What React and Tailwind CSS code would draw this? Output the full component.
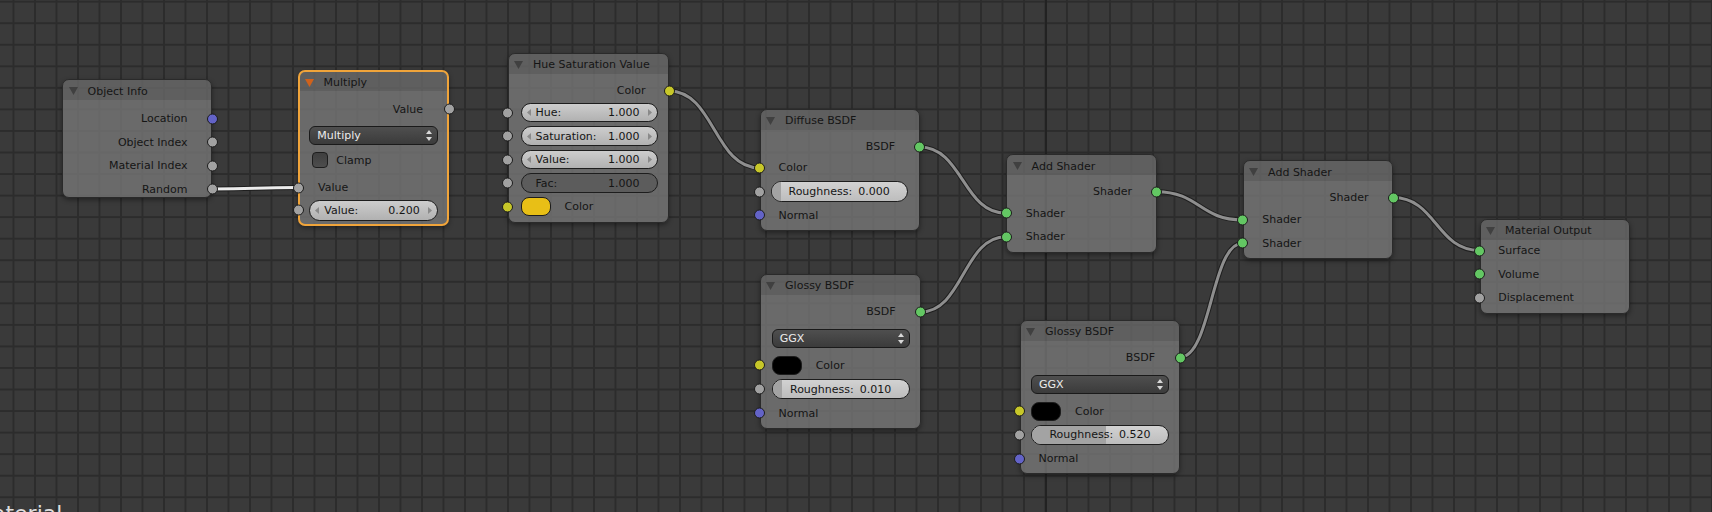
import React from "react";

const SOCK = {
  shader: "bg-[#63c763]",
  color: "bg-[#c7c729]",
  vector: "bg-[#6363c7]",
  value: "bg-[#a1a1a1]",
};

function Socket({ side, type, sel }) {
  const pos =
    side === "left"
      ? sel
        ? "left-[-7.5px]"
        : "left-[-6.5px]"
      : sel
        ? "right-[-7.5px]"
        : "right-[-6.5px]";
  return (
    <span
      className={`absolute top-1/2 -translate-y-1/2 w-[11px] h-[11px] rounded-full border border-[#1c1c1c] ${pos} ${SOCK[type]}`}
    />
  );
}

function Row({ className = "", inSock, outSock, sel, children }) {
  return (
    <div className={`relative flex items-center shrink-0 ${className}`}>
      {inSock && <Socket side="left" type={inSock} sel={sel} />}
      {children}
      {outSock && <Socket side="right" type={outSock} sel={sel} />}
    </div>
  );
}

function Node({ className, title, selected, children }) {
  return (
    <div
      className={`absolute flex flex-col rounded-[7px] bg-[#7b7b7b]/75 shadow-[0_2px_5px_rgba(0,0,0,0.4)] ${
        selected ? "border-2 border-[#f0a43a]" : "border border-[#2a2a2a]"
      } ${className}`}
    >
      <div
        className={`flex items-center shrink-0 rounded-t-[6px] bg-black/10 pt-[2px] ${
          selected ? "h-[19px] pl-[4.6px]" : "h-[20px] pl-[5.6px]"
        }`}
      >
        <svg width="9" height="8" viewBox="0 0 9 8">
          <polygon
            points="0,0 9,0 4.5,8"
            fill={selected ? "#d0621c" : "#404040"}
          />
        </svg>
        <span className="ml-[10px]">{title}</span>
      </div>
      {children}
    </div>
  );
}

function NumField({ label, value, dark }) {
  return (
    <div
      className={`relative flex items-center flex-1 h-full rounded-full border border-[#1d1d1d] pl-[14px] pr-[17px] ${
        dark ? "bg-[#5c5c5c]" : "bg-linear-to-b from-[#cdcdcd] to-[#b1b1b1]"
      }`}
    >
      {!dark && (
        <>
          <svg className="absolute left-[5px]" width="4" height="7" viewBox="0 0 4 7">
            <polygon points="4,0 4,7 0,3.5" fill="#8a8a8a" />
          </svg>
          <svg className="absolute right-[5px]" width="4" height="7" viewBox="0 0 4 7">
            <polygon points="0,0 0,7 4,3.5" fill="#8a8a8a" />
          </svg>
        </>
      )}
      <span>{label}</span>
      <span className="ml-auto">{value}</span>
    </div>
  );
}

function Slider({ value, fill }) {
  return (
    <div className="relative flex items-center justify-center flex-1 h-full rounded-full border border-[#1d1d1d] bg-linear-to-b from-[#d2d2d2] to-[#bdbdbd] overflow-hidden">
      <div
        className="absolute left-0 top-0 bottom-0 bg-[#a3a3a3]"
        style={{ width: fill }}
      />
      <span className="relative">Roughness:</span>
      <span className="relative ml-[6px]">{value}</span>
    </div>
  );
}

function Dropdown({ label }) {
  return (
    <div className="relative flex items-center flex-1 h-full rounded-[6px] border border-[#1a1a1a] bg-linear-to-b from-[#4f4f4f] to-[#3b3b3b] pl-[7px] text-[#ececec]">
      <span>{label}</span>
      <svg className="absolute right-[5px]" width="6" height="11" viewBox="0 0 6 11">
        <polygon points="3,0 6,4 0,4" fill="#d8d8d8" />
        <polygon points="0,7 6,7 3,11" fill="#d8d8d8" />
      </svg>
    </div>
  );
}

function Swatch({ color }) {
  return (
    <div className={`w-[30px] h-full rounded-[8px] border border-[#1d1d1d] ${color}`} />
  );
}

const curve = (x1, y1, x2, y2) => {
  const d = Math.abs(x2 - x1) * 0.5;
  return `M${x1} ${y1} C${x1 + d} ${y1} ${x2 - d} ${y2} ${x2} ${y2}`;
};

const links = [
  [212, 189, 297.7, 187.6, true],
  [669, 90.9, 759.5, 167.9],
  [919.5, 146.9, 1006, 213.3],
  [920.5, 311.9, 1006, 236.8],
  [1156.5, 191.7, 1242.5, 219.9],
  [1180, 357.3, 1242.5, 243.3],
  [1393, 197.6, 1479.5, 250.4],
];

export default function App() {
  return (
    <div className="relative w-[1712px] h-[512px] overflow-hidden bg-[#3a3a3a] bg-[linear-gradient(to_right,#2c2c2c_2px,transparent_2px),linear-gradient(to_bottom,#2c2c2c_2px,transparent_2px)] bg-[size:21.5px_21.55px] bg-[position:12.5px_0.7px] font-['DejaVu_Sans',sans-serif] text-[11px] text-[#151515] leading-none">
      {/* darker grid axis */}
      <div className="absolute left-[1044.6px] top-0 w-[2.2px] h-full bg-[#222222]" />

      {/* links */}
      <svg className="absolute inset-0 pointer-events-none" width="1712" height="512">
        {links.map(([x1, y1, x2, y2, hi], i) => (
          <g key={i}>
            <path d={curve(x1, y1, x2, y2)} fill="none" stroke="#1e1e1e" strokeWidth="5" />
            <path
              d={curve(x1, y1, x2, y2)}
              fill="none"
              stroke={hi ? "#ececec" : "#8e8e8e"}
              strokeWidth="3"
            />
          </g>
        ))}
      </svg>

      {/* Object Info */}
      <Node className="left-[62px] top-[79px] w-[150px] h-[119px]" title="Object Info">
        <Row className="mt-[8.5px] h-[20px] justify-end pr-[23.5px]" outSock="vector">Location</Row>
        <Row className="mt-[3.5px] h-[20px] justify-end pr-[23.5px]" outSock="value">Object Index</Row>
        <Row className="mt-[3.5px] h-[20px] justify-end pr-[23.5px]" outSock="value">Material Index</Row>
        <Row className="mt-[3.5px] h-[20px] justify-end pr-[23.5px]" outSock="value">Random</Row>
      </Node>

      {/* Multiply */}
      <Node className="left-[298px] top-[70px] w-[151px] h-[156px]" title="Multiply" selected>
        <Row className="mt-[8.3px] h-[20px] justify-end pr-[24px]" outSock="value" sel>Value</Row>
        <Row className="mt-[6.4px] h-[19.5px] mx-[9.3px]">
          <Dropdown label="Multiply" />
        </Row>
        <Row className="mt-[5px] h-[20px] pl-[12.3px]">
          <div className="w-[16px] h-[16px] rounded-[4px] border border-[#1d1d1d] bg-linear-to-b from-[#3f3f3f] to-[#4d4d4d]" />
          <span className="ml-[8px]">Clamp</span>
        </Row>
        <Row className="mt-[7.4px] h-[20px] pl-[18px]" inSock="value" sel>Value</Row>
        <Row className="mt-[2.6px] h-[20.4px] mx-[9.3px]">
          <span className="absolute left-[-16.8px] top-1/2 -translate-y-1/2 w-[11px] h-[11px] rounded-full border border-[#1c1c1c] bg-[#a1a1a1]" />
          <NumField label="Value:" value="0.200" />
        </Row>
      </Node>

      {/* Hue Saturation Value */}
      <Node className="left-[507.5px] top-[52.5px] w-[161.5px] h-[170px]" title="Hue Saturation Value">
        <Row className="mt-[7.4px] h-[20px] justify-end pr-[22.5px]" outSock="color">Color</Row>
        <Row className="mt-[2px] h-[19.5px] ml-[12px] mr-[10.5px]">
          <span className="absolute left-[-18.7px] top-1/2 -translate-y-1/2 w-[11px] h-[11px] rounded-full border border-[#1c1c1c] bg-[#a1a1a1]" />
          <NumField label="Hue:" value="1.000" />
        </Row>
        <Row className="mt-[4px] h-[19.5px] ml-[12px] mr-[10.5px]">
          <span className="absolute left-[-18.7px] top-1/2 -translate-y-1/2 w-[11px] h-[11px] rounded-full border border-[#1c1c1c] bg-[#a1a1a1]" />
          <NumField label="Saturation:" value="1.000" />
        </Row>
        <Row className="mt-[4px] h-[19.5px] ml-[12px] mr-[10.5px]">
          <span className="absolute left-[-18.7px] top-1/2 -translate-y-1/2 w-[11px] h-[11px] rounded-full border border-[#1c1c1c] bg-[#a1a1a1]" />
          <NumField label="Value:" value="1.000" />
        </Row>
        <Row className="mt-[4px] h-[19.5px] ml-[12px] mr-[10.5px]">
          <span className="absolute left-[-18.7px] top-1/2 -translate-y-1/2 w-[11px] h-[11px] rounded-full border border-[#1c1c1c] bg-[#a1a1a1]" />
          <NumField label="Fac:" value="1.000" dark />
        </Row>
        <Row className="mt-[4px] h-[19.5px] ml-[12px]">
          <span className="absolute left-[-18.7px] top-1/2 -translate-y-1/2 w-[11px] h-[11px] rounded-full border border-[#1c1c1c] bg-[#c7c729]" />
          <Swatch color="bg-[#e8bf16]" />
          <span className="ml-[14px]">Color</span>
        </Row>
      </Node>

      {/* Diffuse BSDF */}
      <Node className="left-[759.5px] top-[108.5px] w-[160px] h-[122px]" title="Diffuse BSDF">
        <Row className="mt-[7.4px] h-[20px] justify-end pr-[23.5px]" outSock="shader">BSDF</Row>
        <Row className="mt-[1px] h-[20px] pl-[18px]" inSock="color">Color</Row>
        <Row className="mt-[3.6px] h-[20.5px] ml-[10.2px] mr-[11px]">
          <span className="absolute left-[-16.7px] top-1/2 -translate-y-1/2 w-[11px] h-[11px] rounded-full border border-[#1c1c1c] bg-[#a1a1a1]" />
          <Slider value="0.000" fill="9px" />
        </Row>
        <Row className="mt-[3.5px] h-[20px] pl-[18px]" inSock="vector">Normal</Row>
      </Node>

      {/* Glossy BSDF 1 */}
      <Node className="left-[759.5px] top-[273.5px] w-[161px] h-[155px]" title="Glossy BSDF">
        <Row className="mt-[7.4px] h-[20px] justify-end pr-[24px]" outSock="shader">BSDF</Row>
        <Row className="mt-[7.5px] h-[19px] ml-[11.2px] mr-[10px]">
          <Dropdown label="GGX" />
        </Row>
        <Row className="mt-[7.5px] h-[19px] ml-[11.2px]">
          <span className="absolute left-[-17.7px] top-1/2 -translate-y-1/2 w-[11px] h-[11px] rounded-full border border-[#1c1c1c] bg-[#c7c729]" />
          <Swatch color="bg-black" />
          <span className="ml-[14px]">Color</span>
        </Row>
        <Row className="mt-[4px] h-[20.3px] ml-[11.2px] mr-[10px]">
          <span className="absolute left-[-17.7px] top-1/2 -translate-y-1/2 w-[11px] h-[11px] rounded-full border border-[#1c1c1c] bg-[#a1a1a1]" />
          <Slider value="0.010" fill="9px" />
        </Row>
        <Row className="mt-[4px] h-[20px] pl-[18px]" inSock="vector">Normal</Row>
      </Node>

      {/* Glossy BSDF 2 */}
      <Node className="left-[1019.5px] top-[319.5px] w-[160.5px] h-[154px]" title="Glossy BSDF">
        <Row className="mt-[7px] h-[20px] justify-end pr-[24px]" outSock="shader">BSDF</Row>
        <Row className="mt-[7.5px] h-[19px] ml-[10.5px] mr-[10px]">
          <Dropdown label="GGX" />
        </Row>
        <Row className="mt-[7.5px] h-[19px] ml-[10.5px]">
          <span className="absolute left-[-17px] top-1/2 -translate-y-1/2 w-[11px] h-[11px] rounded-full border border-[#1c1c1c] bg-[#c7c729]" />
          <Swatch color="bg-black" />
          <span className="ml-[14px]">Color</span>
        </Row>
        <Row className="mt-[4px] h-[20.3px] ml-[10.5px] mr-[10px]">
          <span className="absolute left-[-17px] top-1/2 -translate-y-1/2 w-[11px] h-[11px] rounded-full border border-[#1c1c1c] bg-[#a1a1a1]" />
          <Slider value="0.520" fill="74px" />
        </Row>
        <Row className="mt-[4px] h-[20px] pl-[18px]" inSock="vector">Normal</Row>
      </Node>

      {/* Add Shader 1 */}
      <Node className="left-[1006px] top-[154px] w-[150.5px] h-[98.5px]" title="Add Shader">
        <Row className="mt-[6.7px] h-[20px] justify-end pr-[23.5px]" outSock="shader">Shader</Row>
        <Row className="mt-[1.8px] h-[20px] pl-[18.7px]" inSock="shader">Shader</Row>
        <Row className="mt-[3.5px] h-[20px] pl-[18.7px]" inSock="shader">Shader</Row>
      </Node>

      {/* Add Shader 2 */}
      <Node className="left-[1242.5px] top-[160px] w-[150.5px] h-[98.5px]" title="Add Shader">
        <Row className="mt-[6.6px] h-[20px] justify-end pr-[23.5px]" outSock="shader">Shader</Row>
        <Row className="mt-[2.4px] h-[20px] pl-[18.7px]" inSock="shader">Shader</Row>
        <Row className="mt-[3.3px] h-[20px] pl-[18.7px]" inSock="shader">Shader</Row>
      </Node>

      {/* Material Output */}
      <Node className="left-[1479.5px] top-[218.5px] w-[150.5px] h-[95px]" title="Material Output">
        <Row className="mt-[1.4px] h-[20px] pl-[17.8px]" inSock="shader">Surface</Row>
        <Row className="mt-[3.3px] h-[20px] pl-[17.8px]" inSock="shader">Volume</Row>
        <Row className="mt-[3.7px] h-[20px] pl-[17.8px]" inSock="value">Displacement</Row>
      </Node>

      {/* material name overlay */}
      <div className="absolute left-[-27px] top-[503px] text-[22px] text-[#dedede] leading-none">
        Material
      </div>
    </div>
  );
}
